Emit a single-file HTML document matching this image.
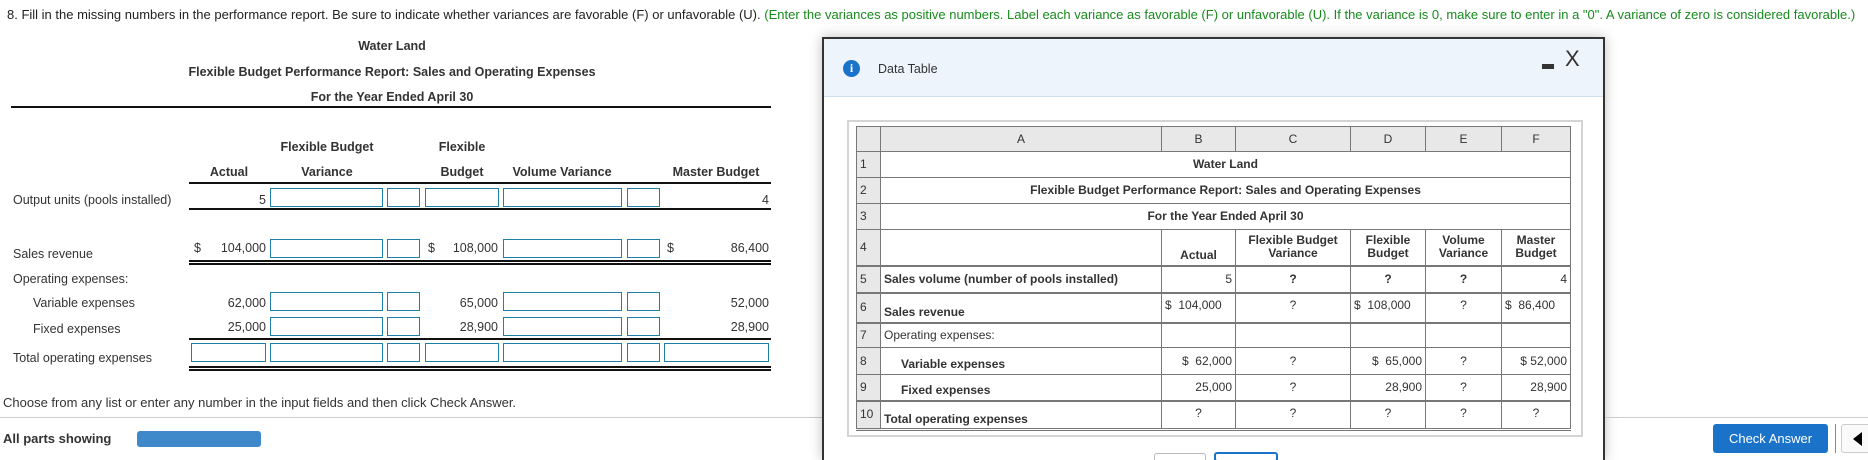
<!DOCTYPE html>
<html><head><meta charset="utf-8"><style>
*{margin:0;padding:0;box-sizing:border-box}
html,body{width:1868px;height:460px;overflow:hidden}
body{background:#fff;font-family:"Liberation Sans",Arial,sans-serif;color:#333;position:relative;font-size:12.5px}
.a{position:absolute;white-space:nowrap;line-height:14px}
.c{transform:translateX(-50%)}
.r{transform:translateX(-100%)}
.b{font-weight:bold}
.in{position:absolute;border:1px solid #1f7fa8;background:#fff}
.hl{position:absolute;height:2px;background:#111}
.dl{position:absolute;height:5px;border-top:2px solid #111;border-bottom:2px solid #111}
#dlg{position:absolute;left:822px;top:37px;width:783px;height:423px;border:2px solid #333;border-bottom:none;background:#fff;box-shadow:0 0 12px rgba(0,0,0,.25);overflow:hidden}
table{border-collapse:collapse;position:absolute;left:856px;top:126px;font-size:12px;table-layout:fixed}
td{border:1px solid #777;padding:0 3px;white-space:nowrap;line-height:13px;vertical-align:middle}
td.n{background:#e8e8e8;text-align:left;padding-left:3px}
tr.h td{background:#e8e8e8;text-align:center;font-weight:normal}
.q{text-align:center}
.rt{text-align:right}
</style></head><body>
<div class="a" style="left:7px;top:8px;font-size:13px"><span style="color:#222">8. Fill in the missing numbers in the performance report. Be sure to indicate whether variances are favorable (F) or unfavorable (U).</span> <span style="color:#188a1e">(Enter the variances as positive numbers. Label each variance as favorable (F) or unfavorable (U). If the variance is 0, make sure to enter in a "0". A variance of zero is considered favorable.)</span></div>

<div class="a b c" style="left:392px;top:39px">Water Land</div>
<div class="a b c" style="left:392px;top:65px">Flexible Budget Performance Report: Sales and Operating Expenses</div>
<div class="a b c" style="left:392px;top:90px">For the Year Ended April 30</div>
<div class="hl" style="left:11px;top:106px;width:760px"></div>

<div class="a b c" style="left:327px;top:140px">Flexible Budget</div>
<div class="a b c" style="left:462px;top:140px">Flexible</div>
<div class="a b c" style="left:229px;top:165px">Actual</div>
<div class="a b c" style="left:327px;top:165px">Variance</div>
<div class="a b c" style="left:462px;top:165px">Budget</div>
<div class="a b c" style="left:562px;top:165px">Volume Variance</div>
<div class="a b c" style="left:716px;top:165px">Master Budget</div>
<div class="hl" style="left:189px;top:182px;width:582px"></div>

<div class="a" style="left:13px;top:193px">Output units (pools installed)</div>
<div class="a r" style="left:266px;top:193px">5</div>
<div class="in" style="left:270px;top:188px;width:113px;height:19px"></div>
<div class="in" style="left:387px;top:188px;width:33px;height:19px"></div>
<div class="in" style="left:425px;top:188px;width:74px;height:19px"></div>
<div class="in" style="left:503px;top:188px;width:119px;height:19px"></div>
<div class="in" style="left:627px;top:188px;width:33px;height:19px"></div>
<div class="a r" style="left:769px;top:193px">4</div>
<div class="hl" style="left:189px;top:208px;width:582px"></div>

<div class="a" style="left:13px;top:247px">Sales revenue</div>
<div class="a" style="left:194px;top:241px">$</div>
<div class="a r" style="left:266px;top:241px">104,000</div>
<div class="in" style="left:270px;top:239px;width:113px;height:19px"></div>
<div class="in" style="left:387px;top:239px;width:33px;height:19px"></div>
<div class="a" style="left:428px;top:241px">$</div>
<div class="a r" style="left:498px;top:241px">108,000</div>
<div class="in" style="left:503px;top:239px;width:119px;height:19px"></div>
<div class="in" style="left:627px;top:239px;width:33px;height:19px"></div>
<div class="a" style="left:667px;top:241px">$</div>
<div class="a r" style="left:769px;top:241px">86,400</div>
<div class="dl" style="left:189px;top:260px;width:582px"></div>

<div class="a" style="left:13px;top:272px">Operating expenses:</div>
<div class="a" style="left:33px;top:296px">Variable expenses</div>
<div class="a r" style="left:266px;top:296px">62,000</div>
<div class="in" style="left:270px;top:292px;width:113px;height:19px"></div>
<div class="in" style="left:387px;top:292px;width:33px;height:19px"></div>
<div class="a r" style="left:498px;top:296px">65,000</div>
<div class="in" style="left:503px;top:292px;width:119px;height:19px"></div>
<div class="in" style="left:627px;top:292px;width:33px;height:19px"></div>
<div class="a r" style="left:769px;top:296px">52,000</div>

<div class="a" style="left:33px;top:322px">Fixed expenses</div>
<div class="a r" style="left:266px;top:320px">25,000</div>
<div class="in" style="left:270px;top:317px;width:113px;height:19px"></div>
<div class="in" style="left:387px;top:317px;width:33px;height:19px"></div>
<div class="a r" style="left:498px;top:320px">28,900</div>
<div class="in" style="left:503px;top:317px;width:119px;height:19px"></div>
<div class="in" style="left:627px;top:317px;width:33px;height:19px"></div>
<div class="a r" style="left:769px;top:320px">28,900</div>
<div class="hl" style="left:189px;top:338px;width:582px"></div>

<div class="a" style="left:13px;top:351px">Total operating expenses</div>
<div class="in" style="left:191px;top:343px;width:75px;height:19px"></div>
<div class="in" style="left:270px;top:343px;width:113px;height:19px"></div>
<div class="in" style="left:387px;top:343px;width:33px;height:19px"></div>
<div class="in" style="left:425px;top:343px;width:74px;height:19px"></div>
<div class="in" style="left:503px;top:343px;width:119px;height:19px"></div>
<div class="in" style="left:627px;top:343px;width:33px;height:19px"></div>
<div class="in" style="left:664px;top:343px;width:105px;height:19px"></div>
<div class="dl" style="left:189px;top:366px;width:582px"></div>

<div class="a" style="left:3px;top:396px;font-size:13px">Choose from any list or enter any number in the input fields and then click Check Answer.</div>
<div style="position:absolute;left:0;top:417px;width:1868px;height:1px;background:#ccc"></div>
<div class="a b" style="left:3px;top:432px;font-size:13px">All parts showing</div>
<div style="position:absolute;left:137px;top:431px;width:124px;height:16px;background:#3f88c9;border-radius:3px"></div>

<div id="dlg">
 <div style="position:absolute;left:0;top:0;width:779px;height:58px;background:#eef4fc;border-bottom:1px solid #cfdff0"></div>
 <div style="position:absolute;left:19px;top:21px;width:17px;height:17px;border-radius:50%;background:#1a73c8;color:#fff;font:bold 12px 'Liberation Serif',serif;text-align:center;line-height:17px">i</div>
 <div class="a" style="left:54px;top:23px;font-size:12.5px">Data Table</div>
 <div style="position:absolute;left:718px;top:25px;width:12px;height:5px;background:#333"></div>
 <div class="a" style="left:741px;top:9px;font-size:22px;line-height:22px;color:#333">X</div>
 <div style="position:absolute;left:23px;top:81px;width:736px;height:317px;border:2px solid #d4d4d4"></div>
 <div style="position:absolute;left:330px;top:414px;width:52px;height:10px;border:1px solid #bbb;border-radius:3px"></div>
 <div style="position:absolute;left:390px;top:413px;width:64px;height:10px;border:2px solid #1a73c8;border-radius:3px"></div>
</div>

<table>
<colgroup><col style="width:24px"><col style="width:281px"><col style="width:74px"><col style="width:115px"><col style="width:75px"><col style="width:76px"><col style="width:69px"></colgroup>
<tr class="h" style="height:25px"><td></td><td>A</td><td>B</td><td>C</td><td>D</td><td>E</td><td>F</td></tr>
<tr style="height:26px"><td class="n">1</td><td colspan="6" class="q b">Water Land</td></tr>
<tr style="height:26px"><td class="n">2</td><td colspan="6" class="q b">Flexible Budget Performance Report: Sales and Operating Expenses</td></tr>
<tr style="height:26px"><td class="n">3</td><td colspan="6" class="q b">For the Year Ended April 30</td></tr>
<tr style="height:36px" class="b"><td class="n" style="font-weight:normal">4</td><td></td><td class="q" style="vertical-align:bottom;padding-bottom:3px">Actual</td><td class="q">Flexible Budget<br>Variance</td><td class="q">Flexible<br>Budget</td><td class="q">Volume<br>Variance</td><td class="q">Master<br>Budget</td></tr>
<tr style="height:27px;border-top:2px solid #777"><td class="n">5</td><td class="b">Sales volume (number of pools installed)</td><td class="rt">5</td><td class="q b">?</td><td class="q b">?</td><td class="q b">?</td><td class="rt">4</td></tr>
<tr style="height:30px;border-top:2px solid #777"><td class="n">6</td><td class="b" style="vertical-align:bottom;padding-bottom:3px">Sales revenue</td><td style="vertical-align:top;padding-top:5px">$&nbsp; 104,000</td><td class="q" style="vertical-align:top;padding-top:5px">?</td><td style="vertical-align:top;padding-top:5px">$&nbsp; 108,000</td><td class="q" style="vertical-align:top;padding-top:5px">?</td><td style="vertical-align:top;padding-top:5px">$&nbsp; 86,400</td></tr>
<tr style="height:25px;border-top:2px solid #777"><td class="n">7</td><td>Operating expenses:</td><td></td><td></td><td></td><td></td><td></td></tr>
<tr style="height:27px"><td class="n">8</td><td class="b" style="padding-left:20px;vertical-align:bottom;padding-bottom:3px">Variable expenses</td><td class="rt">$&nbsp; 62,000</td><td class="q">?</td><td class="rt">$&nbsp; 65,000</td><td class="q">?</td><td class="rt">$ 52,000</td></tr>
<tr style="height:26px"><td class="n">9</td><td class="b" style="padding-left:20px;vertical-align:bottom;padding-bottom:3px">Fixed expenses</td><td class="rt">25,000</td><td class="q">?</td><td class="rt">28,900</td><td class="q">?</td><td class="rt">28,900</td></tr>
<tr style="height:29px;border-top:2px solid #777;border-bottom:3px double #777"><td class="n">10</td><td class="b" style="vertical-align:bottom;padding-bottom:2px">Total operating expenses</td><td class="q" style="vertical-align:top;padding-top:5px">?</td><td class="q" style="vertical-align:top;padding-top:5px">?</td><td class="q" style="vertical-align:top;padding-top:5px">?</td><td class="q" style="vertical-align:top;padding-top:5px">?</td><td class="q" style="vertical-align:top;padding-top:5px">?</td></tr>
</table>

<div style="position:absolute;left:1605px;top:417px;width:263px;height:1px;background:#ccc"></div>
<div style="position:absolute;left:1713px;top:424px;width:115px;height:29px;background:#1a73c8;border-radius:3px;color:#fff;font-size:13px;text-align:center;line-height:29px">Check Answer</div>
<div style="position:absolute;left:1835px;top:424px;width:1px;height:29px;background:#888"></div>
<div style="position:absolute;left:1841px;top:424px;width:40px;height:29px;border:1px solid #ccc;border-radius:3px;background:#fafafa"></div>
<div style="position:absolute;left:1853px;top:432px;width:0;height:0;border-top:7px solid transparent;border-bottom:7px solid transparent;border-right:9px solid #000"></div>
</body></html>
